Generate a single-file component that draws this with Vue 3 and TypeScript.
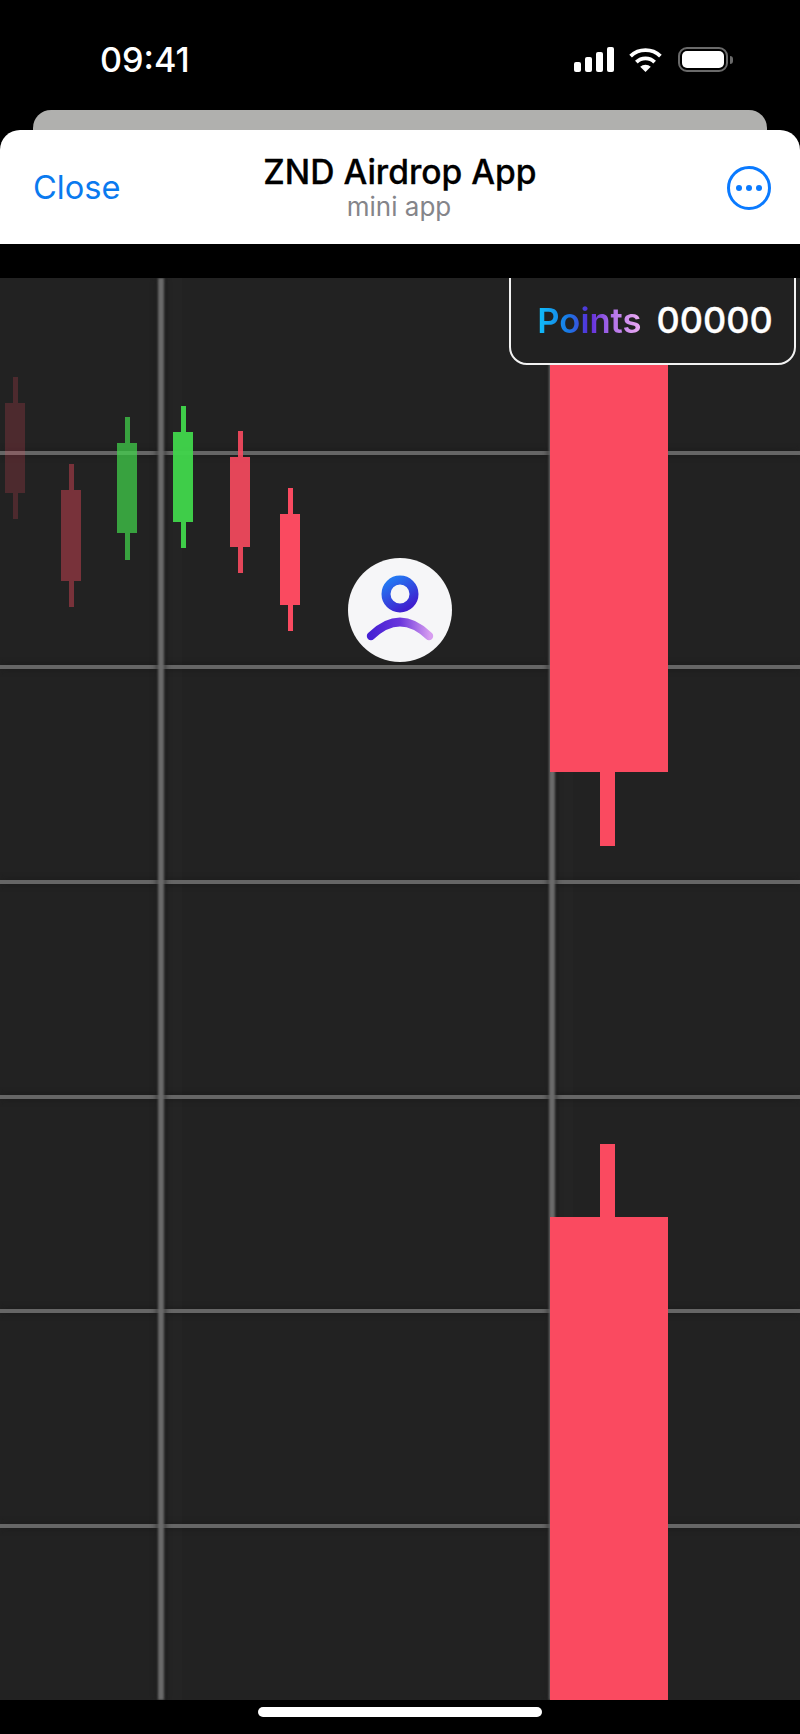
<script setup lang="ts">
interface Candle {
  left: number;
  top: number;
  height: number;
  bodyTop: number;
  bodyHeight: number;
  color: string;
  opacity: number;
}

const CHART_TOP = 278;
const RED = "#fa4a60";
const GREEN = "#41d44b";

// y values below are page coordinates, minus the chart's own offset when drawn
const candles: Candle[] = [
  { left: 5, top: 377, height: 142, bodyTop: 403, bodyHeight: 90, color: RED, opacity: 0.2 },
  { left: 61, top: 464, height: 143, bodyTop: 490, bodyHeight: 91, color: RED, opacity: 0.4 },
  { left: 117, top: 417, height: 143, bodyTop: 443, bodyHeight: 90, color: GREEN, opacity: 0.72 },
  { left: 173, top: 406, height: 142, bodyTop: 432, bodyHeight: 90, color: GREEN, opacity: 0.96 },
  { left: 230, top: 431, height: 142, bodyTop: 457, bodyHeight: 90, color: RED, opacity: 0.9 },
  { left: 280, top: 488, height: 143, bodyTop: 514, bodyHeight: 91, color: RED, opacity: 1 },
];

const rows = [453, 667, 882, 1097, 1311, 1526].map((y) => y - CHART_TOP);

function candleStyle(c: Candle) {
  return { left: `${c.left}px`, top: `${c.top - CHART_TOP}px`, height: `${c.height}px`, opacity: c.opacity };
}
function wickStyle(c: Candle) {
  return { background: c.color };
}
function bodyStyle(c: Candle) {
  return { background: c.color, top: `${c.bodyTop - c.top}px`, height: `${c.bodyHeight}px` };
}
</script>

<template>
  <div class="phone">
    <header class="status">
      <span class="time">09:41</span>
      <div class="status-icons">
        <div class="signal">
          <i class="b1"></i><i class="b2"></i><i class="b3"></i><i class="b4"></i>
        </div>
        <svg class="wifi" width="35" height="25" viewBox="0 0 35 26">
          <path d="M2 9.5A22.5 22.5 0 0 1 33 9.5" fill="none" stroke="#fff" stroke-width="4" />
          <path d="M8 15.8A13.5 13.5 0 0 1 27 15.8" fill="none" stroke="#fff" stroke-width="4" />
          <path d="M12 20.6A7.8 7.8 0 0 1 23 20.6L17.5 26Z" fill="#fff" />
        </svg>
        <div class="battery">
          <div class="cell"><div class="charge"></div></div>
          <div class="nub"></div>
        </div>
      </div>
    </header>

    <div class="back-sheet"></div>

    <nav class="sheet">
      <span class="close">Close</span>
      <div class="titles">
        <div class="title">ZND Airdrop App</div>
        <div class="subtitle">mini app</div>
      </div>
      <svg class="more" width="46" height="46" viewBox="0 0 46 46">
        <circle cx="23" cy="23" r="20.5" fill="none" stroke="#0a7aff" stroke-width="3" />
        <circle cx="13" cy="23" r="3" fill="#0a7aff" />
        <circle cx="23" cy="23" r="3" fill="#0a7aff" />
        <circle cx="33" cy="23" r="3" fill="#0a7aff" />
      </svg>
    </nav>

    <main class="chart">
      <div class="col-faint col-a-faint"></div>
      <div class="col-faint col-b-faint"></div>
      <div v-for="y in rows" :key="y" class="row-line" :style="{ top: `${y}px` }"></div>
      <div class="col-line col-a"></div>
      <div class="col-line col-b"></div>

      <div v-for="c in candles" :key="c.left" class="candle" :style="candleStyle(c)">
        <div class="wick" :style="wickStyle(c)"></div>
        <div class="body" :style="bodyStyle(c)"></div>
      </div>

      <div class="big big-upper">
        <div class="big-body upper-body"></div>
        <div class="big-wick upper-wick"></div>
      </div>
      <div class="big big-lower">
        <div class="big-wick lower-wick"></div>
        <div class="big-body lower-body"></div>
      </div>

      <div class="avatar">
        <svg width="104" height="104" viewBox="0 0 104 104">
          <defs>
            <linearGradient id="headGrad" x1="0.15" y1="0" x2="0.75" y2="1">
              <stop offset="0" stop-color="#2478f2" />
              <stop offset="1" stop-color="#3f1fcf" />
            </linearGradient>
            <linearGradient
              id="armGrad"
              gradientUnits="userSpaceOnUse"
              x1="22"
              y1="70"
              x2="82"
              y2="70"
            >
              <stop offset="0" stop-color="#4520d4" />
              <stop offset="0.5" stop-color="#6a35dc" />
              <stop offset="1" stop-color="#d79df0" />
            </linearGradient>
          </defs>
          <circle cx="52" cy="36" r="14" fill="none" stroke="url(#headGrad)" stroke-width="9" />
          <path
            d="M23 78Q52 50 81 78"
            fill="none"
            stroke="url(#armGrad)"
            stroke-width="8.4"
            stroke-linecap="round"
          />
        </svg>
      </div>

      <div class="points">
        <span class="points-label">Points</span>
        <span class="points-value">00000</span>
      </div>
    </main>

    <footer class="home">
      <div class="home-bar"></div>
    </footer>
  </div>
</template>

<style>
body {
  margin: 0;
  background: #000;
}
</style>

<style scoped>
.phone {
  width: 800px;
  height: 1734px;
  overflow: hidden;
  background: #000;
  display: flex;
  flex-direction: column;
  font-family: Inter, "Liberation Sans", sans-serif;
}

/* status bar */
.status {
  height: 110px;
  box-sizing: border-box;
  padding: 47px 67px 0 100px;
  display: flex;
  justify-content: space-between;
  align-items: flex-start;
}
.time {
  color: #fff;
  font-size: 34.2px;
  font-weight: 500;
  line-height: 25px;
}
.status-icons {
  display: flex;
  align-items: flex-start;
}
.signal {
  display: flex;
  align-items: flex-end;
  gap: 4px;
  height: 25px;
  margin-right: 14px;
}
.signal i {
  display: block;
  width: 7px;
  background: #fff;
  border-radius: 2px;
}
.signal .b1 { height: 10px; }
.signal .b2 { height: 15px; }
.signal .b3 { height: 20px; }
.signal .b4 { height: 25px; }
.wifi {
  margin-right: 15px;
}
.battery {
  display: flex;
  align-items: center;
  height: 25px;
}
.cell {
  width: 50px;
  height: 25px;
  box-sizing: border-box;
  border: 2px solid #6a6a6a;
  border-radius: 9px;
  padding: 2px;
}
.charge {
  width: 100%;
  height: 100%;
  background: #fff;
  border-radius: 5px;
}
.nub {
  width: 3px;
  height: 8px;
  margin-left: 2px;
  background: #6a6a6a;
  border-radius: 0 3px 3px 0;
}

/* mini app header */
.back-sheet {
  height: 20px;
  margin: 0 33px;
  background: #b0b0ae;
  border-radius: 18px 18px 0 0;
}
.sheet {
  height: 114px;
  box-sizing: border-box;
  background: #fff;
  border-radius: 20px 20px 0 0;
  padding: 0 28px 0 33px;
  display: flex;
  align-items: center;
  justify-content: space-between;
  position: relative;
}
.close {
  color: #0a7aef;
  font-size: 32.6px;
  line-height: 40px;
}
.titles {
  position: absolute;
  left: 0;
  right: 0;
  top: 23px;
  text-align: center;
}
.title {
  color: #000;
  font-size: 33.6px;
  font-weight: 500;
  -webkit-text-stroke: 0.3px #000;
  line-height: 38px;
}
.subtitle {
  color: #85858a;
  font-size: 26px;
  line-height: 30px;
  margin-top: 1px;
  margin-left: -2px;
}
.more {
  display: block;
  margin-top: 2px;
}

/* chart */
.chart {
  position: relative;
  height: 1422px;
  margin-top: 34px;
  background: #222;
  overflow: hidden;
}
.row-line {
  position: absolute;
  left: 0;
  right: 0;
  height: 4px;
  margin-top: -2px;
  background: #666;
  filter: blur(0.6px);
  box-shadow: 0 0 6px #1b1b1b;
}
.col-line {
  position: absolute;
  top: 0;
  bottom: 0;
  background: #6a6a6a;
  filter: blur(0.8px);
  box-shadow: 0 0 6px #1b1b1b;
}
.col-a {
  left: 158px;
  width: 6px;
}
.col-b {
  left: 549px;
  width: 6px;
}
.col-faint {
  position: absolute;
  top: 0;
  bottom: 0;
  width: 14px;
  background: #242424;
}
.col-a-faint {
  left: 168px;
}
.col-b-faint {
  left: 559px;
}
.candle {
  position: absolute;
  width: 20px;
}
.wick {
  position: absolute;
  left: 8px;
  top: 0;
  bottom: 0;
  width: 5px;
}
.body {
  position: absolute;
  left: 0;
  width: 20px;
}
.big {
  position: absolute;
  left: 550px;
  width: 118px;
  display: flex;
  flex-direction: column;
  align-items: center;
}
.big-upper {
  top: 0;
}
.big-lower {
  top: 866px;
  bottom: 0;
}
.big-body {
  width: 118px;
  background: #fa4a60;
}
.big-wick {
  width: 15px;
  margin-left: -3px;
  background: #fa4a60;
}
.upper-body {
  height: 494px;
}
.upper-wick {
  height: 74px;
}
.lower-wick {
  height: 73px;
}
.lower-body {
  flex: 1;
}
.avatar {
  position: absolute;
  left: 348px;
  top: 280px;
  width: 104px;
  height: 104px;
  border-radius: 50%;
  background: #f6f6f8;
}
.avatar svg {
  display: block;
}
.points {
  position: absolute;
  top: -2px;
  left: 509px;
  width: 287px;
  height: 89px;
  box-sizing: border-box;
  border: 2px solid #f2f2f2;
  border-radius: 0 0 18px 18px;
  background: #212121;
  display: flex;
  align-items: center;
  justify-content: center;
  gap: 15px;
  font-weight: 600;
  line-height: 40px;
  padding: 0 0 2px 5px;
}
.points-label {
  font-size: 34.6px;
  background: linear-gradient(90deg, #0fc0fa 0%, #1878e4 30%, #5b2bd9 50%, #b272ea 72%, #eeaef2 100%);
  -webkit-background-clip: text;
  background-clip: text;
  color: transparent;
}
.points-value {
  font-size: 36px;
  font-weight: 500;
  -webkit-text-stroke: 0.3px #fff;
  color: #fff;
}

/* home indicator */
.home {
  flex: 1;
  padding-top: 7px;
  display: flex;
  justify-content: center;
  align-items: flex-start;
}
.home-bar {
  width: 284px;
  height: 10px;
  background: #fff;
  border-radius: 5px;
}
</style>
